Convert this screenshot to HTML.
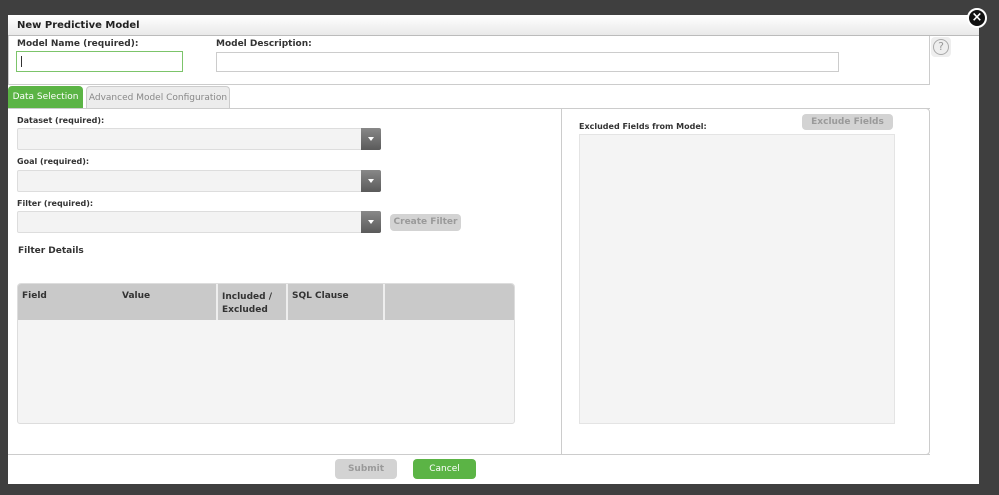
<!DOCTYPE html><html><head><style>
*{margin:0;padding:0;box-sizing:border-box}
body{width:999px;height:495px;background:#3f3f3f;position:relative;font-family:"DejaVu Sans","Liberation Sans",sans-serif;overflow:hidden}
.a{position:absolute}
.lbl{font-size:9px;font-weight:bold;color:#333}
.sel{background:#f3f3f3;border:1px solid #ddd;border-radius:2px}
.arr{position:absolute;right:-1px;top:-1px;bottom:-1px;width:20px;background:linear-gradient(#888,#5a5a5a);border-radius:0 2px 2px 0}
.arr:after{content:"";position:absolute;left:7px;top:9px;border-left:3px solid transparent;border-right:3px solid transparent;border-top:4px solid #fff}
.btn{font-size:9px;font-weight:bold;color:#9a9a9a;background:#d3d3d3;border-radius:4px;text-align:center}
</style></head><body>
<div class="a" style="left:8px;top:15px;width:971px;height:469px;background:#fff"></div>
<div class="a" style="left:8px;top:15px;width:971px;height:21px;background:linear-gradient(#fff,#e9e9e9);border-bottom:1px solid #bbb"></div>
<div class="a lbl" style="left:17px;top:20px;font-size:10px;color:#222">New Predictive Model</div>
<div class="a" style="left:967px;top:8px;width:20px;height:20px;border-radius:50%;background:#111;border:2px solid #fff;color:#fff;font-size:13px;font-weight:bold;text-align:center;line-height:15px">×</div>
<div class="a" style="left:8px;top:36px;width:922px;height:49px;border:1px solid #ccc;border-top:none"></div>
<div class="a lbl" style="left:17px;top:39px">Model Name (required):</div>
<div class="a" style="left:16px;top:51px;width:167px;height:21px;border:1px solid #7cc46a"><div style="position:absolute;left:4px;top:4px;width:1px;height:11px;background:#333"></div></div>
<div class="a lbl" style="left:216px;top:39px">Model Description:</div>
<div class="a" style="left:216px;top:52px;width:623px;height:20px;border:1px solid #ccc"></div>
<div class="a" style="left:931px;top:37px;width:20px;height:20px;background:#eee;border-radius:4px"><div style="margin:2px;width:16px;height:16px;border:1px solid #aaa;border-radius:50%;color:#999;font-size:11px;text-align:center;line-height:14px">?</div></div>
<div class="a" style="left:8px;top:86px;width:75px;height:23px;background:#5bb445;border-radius:4px 4px 0 0;color:#fff;font-size:9px;line-height:23px;text-align:center">Data Selection</div>
<div class="a" style="left:86px;top:86px;width:144px;height:23px;background:#ececec;border:1px solid #ccc;border-bottom:none;border-radius:4px 4px 0 0;color:#888;font-size:9px;line-height:22px;text-align:center">Advanced Model Configuration</div>
<div class="a" style="left:8px;top:108px;width:922px;height:347px;border-bottom:1px solid #ccc;border-top:1px solid #ccc"></div>
<div class="a" style="left:561px;top:108px;width:369px;height:347px;border:1px solid #ccc;border-radius:0 4px 4px 0"></div>
<div class="a lbl" style="left:17px;top:116px;font-size:8px">Dataset (required):</div>
<div class="a sel" style="left:17px;top:128px;width:364px;height:22px"><div class="arr"></div></div>
<div class="a lbl" style="left:17px;top:157px;font-size:8px">Goal (required):</div>
<div class="a sel" style="left:17px;top:170px;width:364px;height:22px"><div class="arr"></div></div>
<div class="a lbl" style="left:17px;top:199px;font-size:8px">Filter (required):</div>
<div class="a sel" style="left:17px;top:211px;width:364px;height:22px"><div class="arr"></div></div>
<div class="a btn" style="left:390px;top:214px;width:71px;height:17px;line-height:17px">Create Filter</div>
<div class="a lbl" style="left:18px;top:246px">Filter Details</div>
<div class="a" style="left:17px;top:283px;width:498px;height:141px;background:#f4f4f4;border:1px solid #ddd;border-radius:4px 4px 3px 3px;overflow:hidden">
<div style="position:absolute;left:0;top:0;right:0;height:36px;background:#c9c9c9"></div>
<div style="position:absolute;left:198px;top:0;width:2px;height:36px;background:#eee"></div>
<div style="position:absolute;left:268px;top:0;width:2px;height:36px;background:#eee"></div>
<div style="position:absolute;left:365px;top:0;width:2px;height:36px;background:#eee"></div>
<div class="lbl" style="position:absolute;left:4px;top:7px">Field</div>
<div class="lbl" style="position:absolute;left:104px;top:7px">Value</div>
<div class="lbl" style="position:absolute;left:204px;top:7px;line-height:13px">Included /<br>Excluded</div>
<div class="lbl" style="position:absolute;left:274px;top:7px">SQL Clause</div>
</div>
<div class="a lbl" style="left:579px;top:122px;font-size:8px">Excluded Fields from Model:</div>
<div class="a btn" style="left:802px;top:114px;width:91px;height:16px;line-height:16px">Exclude Fields</div>
<div class="a" style="left:579px;top:134px;width:316px;height:290px;background:#f4f4f4;border:1px solid #e4e4e4"></div>
<div class="a btn" style="left:335px;top:459px;width:62px;height:20px;line-height:20px">Submit</div>
<div class="a btn" style="left:413px;top:459px;width:63px;height:20px;line-height:20px;background:#5bb445;color:#fff;font-weight:normal">Cancel</div>
</body></html>
